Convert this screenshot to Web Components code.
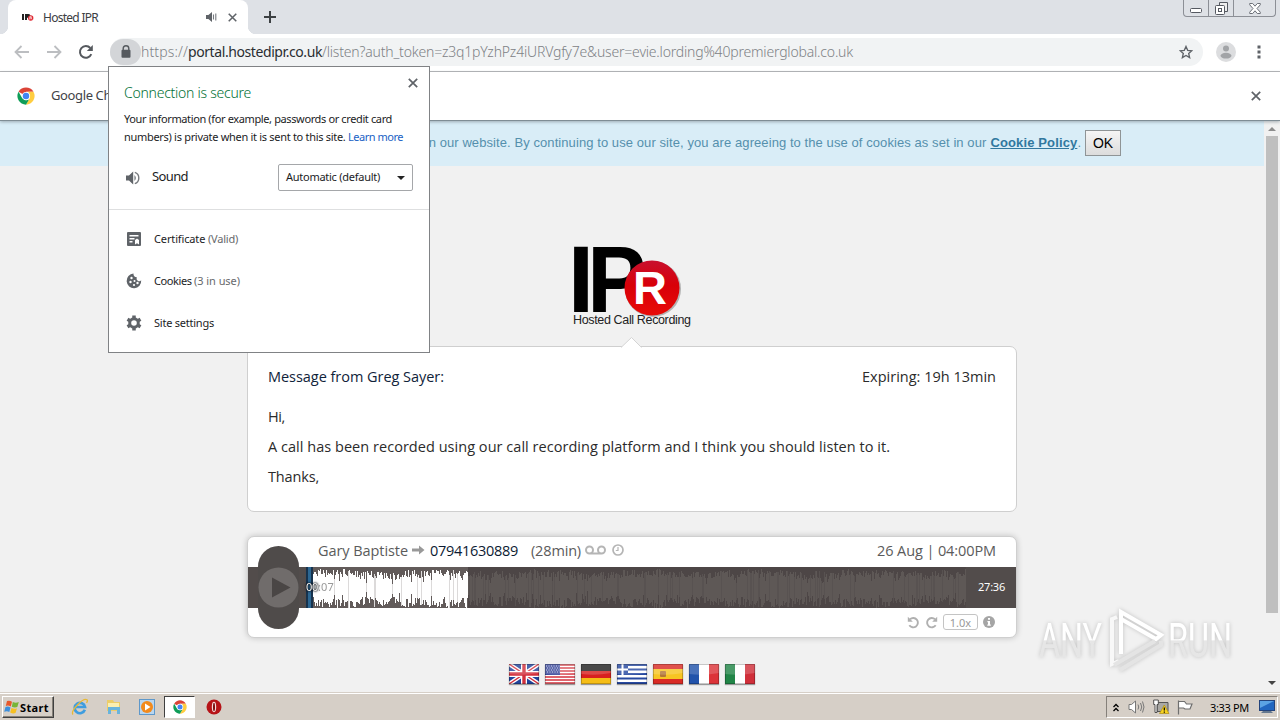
<!DOCTYPE html>
<html lang="en">
<head>
<meta charset="utf-8">
<title>Hosted IPR</title>
<style>
    :root {
        --ui: "Noto Sans", "DejaVu Sans", sans-serif;
        --body: "Open Sans", "Noto Sans", sans-serif;
        --page: #f1f1f1;
    }
    body {
        margin: 0;
        width: 1280px;
        height: 720px;
        overflow: hidden;
        position: relative;
        display: flex;
        flex-direction: column;
        font-family: var(--ui);
        background: var(--page);
    }
    .viewport { display: flex; height: 571px; }
    .page { width: 1264px; display: flex; flex-direction: column; align-items: center; overflow: hidden; }
</style>
</head>
<body>
<tab-strip></tab-strip>
<address-bar></address-bar>
<info-bar></info-bar>
<div class="viewport">
    <div class="page">
        <cookie-notice></cookie-notice>
        <ipr-logo></ipr-logo>
        <message-card>
            <fit-text slot="from" width="176">Message from Greg Sayer:</fit-text>
            <fit-text slot="expiry" width="134">Expiring: 19h 13min</fit-text>
            <div><fit-text width="17">Hi,</fit-text></div>
            <div><fit-text width="622">A call has been recorded using our call recording platform and I think you should listen to it.</fit-text></div>
            <div><fit-text width="51">Thanks,</fit-text></div>
        </message-card>
        <call-player></call-player>
        <flag-row></flag-row>
    </div>
    <scroll-bar></scroll-bar>
</div>
<task-bar></task-bar>
<site-popup></site-popup>
<water-mark></water-mark>

<script>
// 1. Helpers
function define(name, html, extra) {
    customElements.define(name, class extends HTMLElement {
        constructor() {
            super();
            this.attachShadow({ mode: 'open' }).innerHTML = html;
            if (extra) extra(this.shadowRoot);
        }
    });
}

const closeIcon = (size, color = '#5f6368') => `
    <svg width="${size}" height="${size}" viewBox="0 0 10 10"><path d="M.8.8l8.4 8.4M9.2.8L.8 9.2" stroke="${color}" stroke-width="1.7"/></svg>`;

const chromeIcon = (size) => `
    <svg width="${size}" height="${size}" viewBox="0 0 48 48">
        <circle cx="24" cy="24" r="23" fill="#fff"/>
        <path d="M24 24L4.1 12.5A23 23 0 0 1 43.9 12.5H24z" fill="#db4437"/>
        <path d="M43.9 12.5A23 23 0 0 1 24 47L34 29.5 30 12.5z" fill="#ffcd40"/>
        <path d="M24 47A23 23 0 0 1 4.1 12.5L14 29.7l10 5.3 8-2z" fill="#0f9d58"/>
        <circle cx="24" cy="24" r="11" fill="#fff"/>
        <circle cx="24" cy="24" r="8.6" fill="#4285f4"/>
    </svg>`;

// Text that spreads its letters over a given width
class FitText extends HTMLElement {
    constructor() {
        super();
        // no whitespace around the slot: the host keeps it
        this.attachShadow({ mode: 'open' }).innerHTML =
            '<style>:host { display: inline-block; white-space: pre; }</style><slot></slot>';
    }
    connectedCallback() {
        queueMicrotask(() => {
            const range = document.createRange();
            range.selectNodeContents(this);
            const natural = range.getBoundingClientRect().width;
            const target = Number(this.getAttribute('width'));
            this.style.letterSpacing = (target - natural) / this.textContent.length + 'px';
        });
    }
}
customElements.define('fit-text', FitText);

// 2. Browser chrome
define('tab-strip', `
    <style>
        :host { display: flex; height: 34px; background: #dee1e6; padding-left: 8px; box-sizing: border-box; justify-content: space-between; }
        .left { display: flex; align-items: center; }
        .tab { box-sizing: border-box; position: relative; width: 240px; height: 34px; background: #fff; border-radius: 8px 8px 0 0; display: flex; align-items: center; padding: 0 11px 0 14px; font-size: 12px; color: #3c4043; }
        .tab::before, .tab::after { content: ""; position: absolute; bottom: 0; width: 8px; height: 8px; }
        .tab::before { left: -8px; background: radial-gradient(circle at 0 0, #dee1e6 8px, #fff 8.5px); }
        .tab::after { right: -8px; background: radial-gradient(circle at 100% 0, #dee1e6 8px, #fff 8.5px); }
        .title { flex: 1; margin-left: 9px; }
        .plus { margin-left: 16px; }
        .window { display: flex; width: 93px; height: 17px; margin-right: 4px; box-sizing: border-box; border: 1px solid #8c8f96; border-top: 0; border-radius: 0 0 4px 4px; }
        .window div { display: flex; align-items: center; justify-content: center; border-right: 1px solid #8c8f96; }
        svg { display: block; }
    </style>
    <div class="left">
        <div class="tab">
            <svg width="12" height="12" viewBox="0 0 12 12"><path d="M0 3h2v6H0zM3 3h3.5a1.8 1.8 0 0 1 0 3.8H5V9H3z" fill="#222"/><circle cx="8.7" cy="7" r="2.7" fill="#e02a33"/><path d="M7.8 8.5V5.7h1.5v1.2H8M9 7l1 1.4" stroke="#fff" stroke-width=".7" fill="none"/></svg>
            <span class="title"><fit-text width="55">Hosted IPR</fit-text></span>
            <svg width="11" height="10" viewBox="0 0 11 10"><path d="M0 3h2.4L6 0v10L2.4 7H0z" fill="#5f6368"/><path d="M7.5 2.5v5M9.8 1.5v7" stroke="#777b80" stroke-width="1.1"/></svg>
            <span style="margin-left:11px">${closeIcon(9)}</span>
        </div>
        <svg class="plus" width="12" height="12" viewBox="0 0 12 12"><path d="M6 0v12M0 6h12" stroke="#3c4043" stroke-width="2"/></svg>
    </div>
    <div class="window">
        <div style="width:24px"><svg width="12" height="5" style="margin-top:4px"><rect x=".5" y=".5" width="11" height="4" rx="1" fill="#fff" stroke="#555961"/></svg></div>
        <div style="width:24px"><svg width="13" height="13"><path d="M4.5 3V.5h8v9H10" fill="#eee" stroke="#555961"/><rect x=".5" y="3.5" width="9" height="9" rx="1" fill="#fff" stroke="#555961"/><rect x="3.5" y="6.5" width="3" height="3" fill="none" stroke="#555961"/></svg></div>
        <div style="flex:1;border:0"><svg width="12" height="11"><path d="M.7.5h3L6 3.2 8.3.5h3v1.3L8 5.5l3.3 3.7v1.3h-3L6 7.8 3.7 10.5h-3V9.2L4 5.5.7 1.8z" fill="#fff" stroke="#6c7078"/></svg></div>
    </div>
`);

define('address-bar', `
    <style>
        :host { display: flex; align-items: center; box-sizing: border-box; height: 38px; padding: 0 0 2px 14px; background: #fff; border-bottom: 1px solid #b6b6b8; }
        svg { display: block; flex: none; }
        .field { display: flex; align-items: center; box-sizing: border-box; width: 1093px; height: 28px; margin-left: 16px; background: #f1f3f4; border-radius: 14px; padding-right: 10px; font-size: 14px; color: #7d8185; font-weight: 300; }
        .lock { width: 31px; height: 26px; border-radius: 14px; background: #d3d5d8; display: flex; align-items: center; justify-content: center; }
        .domain { color: #2a2d31; font-weight: 400; }
        .url { flex: 1; display: flex; }
    </style>
    <svg width="16" height="14" viewBox="0 0 16 14"><path d="M15 7H2M7.5 1L1.5 7l6 6" fill="none" stroke="#bcbec1" stroke-width="1.8"/></svg>
    <svg width="16" height="14" viewBox="0 0 16 14" style="margin-left:16px"><path d="M1 7h13M8.5 1l6 6-6 6" fill="none" stroke="#bcbec1" stroke-width="1.8"/></svg>
    <svg width="16" height="16" viewBox="0 0 16 16" style="margin-left:16px"><path d="M13.3 10.2A5.9 5.9 0 1 1 12.3 4" fill="none" stroke="#55595e" stroke-width="2"/><path d="M14.8 1v6h-6z" fill="#55595e"/></svg>
    <div class="field">
        <div class="lock"><svg width="10" height="13" viewBox="0 0 10 13"><path d="M2.2 5V3.5a2.8 2.8 0 0 1 5.6 0V5" fill="none" stroke="#55595e" stroke-width="1.4"/><rect x=".5" y="4.7" width="9" height="8" rx="1" fill="#55595e"/></svg></div>
        <div class="url"><fit-text width="47">https://</fit-text><fit-text class="domain" width="134">portal.hostedipr.co.uk</fit-text><fit-text width="531">/listen?auth_token=z3q1pYzhPz4iURVgfy7e&amp;user=evie.lording%40premierglobal.co.uk</fit-text></div>
        <svg width="14" height="14" viewBox="0 0 24 24"><path d="M12 2.5l2.9 6.7 7.1.6-5.4 4.8 1.6 7L12 17.9 5.8 21.6l1.6-7L2 9.8l7.1-.6z" fill="none" stroke="#5f6368" stroke-width="2.3"/></svg>
    </div>
    <svg width="20" height="20" viewBox="0 0 20 20" style="margin-left:13px"><circle cx="10" cy="10" r="10" fill="#dcdddf"/><circle cx="10" cy="6.5" r="3" fill="#a2a4a7"/><ellipse cx="10" cy="13.7" rx="5.5" ry="2.9" fill="#a2a4a7"/></svg>
    <svg width="4" height="14" viewBox="0 0 4 14" style="margin-left:21px"><path d="M.5.5h3v3h-3zM.5 5.5h3v3h-3zM.5 10.5h3v3h-3z" fill="#5f6368"/></svg>
`);

define('info-bar', `
    <style>
        :host { display: flex; align-items: center; box-sizing: border-box; height: 49px; padding: 0 19px 0 17px; background: #fff; border-bottom: 1px solid #7f8d95; box-shadow: 0 1px 3px #7f8d95aa; position: relative; font-size: 13px; color: #3f4347; }
        .msg { flex: 1; margin: 0 0 2px 16px; }
        svg { display: block; }
    </style>
    ${chromeIcon(18)}
    <span class="msg"><fit-text width="91">Google Chrome</fit-text></span>
    ${closeIcon(10)}
`);

define('scroll-bar', `
    <style>
        :host { width: 16px; display: flex; flex-direction: column; align-items: center; justify-content: space-between; background: #f1f1f1; box-sizing: border-box; padding: 5px 0 6px; }
        .thumb { width: 12px; height: 477px; margin-top: 5px; margin-bottom: auto; background: #bfbfbf; }
    </style>
    <svg width="8" height="5"><path d="M0 5l4-4 4 4z" fill="#8c8c8c"/></svg>
    <div class="thumb"></div>
    <svg width="8" height="5"><path d="M0 0h8L4 4z" fill="#444"/></svg>
`);

// 3. Page content
define('cookie-notice', `
    <style>
        :host { display: flex; align-items: center; justify-content: flex-end; box-sizing: border-box; width: 1264px; height: 45px; padding: 0 143px 2px 0; background: #d9edf7; color: #5590ad; font: 13px "Liberation Sans", sans-serif; }
        b { color: #31789f; margin-left: 4px; }
        b fit-text { text-decoration: underline; }
        button { width: 36px; height: 26px; margin-left: 4px; padding: 0; border: 1px solid #8f9496; border-radius: 0; background: linear-gradient(#f5f5f5, #dcdcdc); font: 14px "Liberation Sans", sans-serif; color: #000; }
    </style>
    <fit-text width="565">on our website. By continuing to use our site, you are agreeing to the use of cookies as set in our</fit-text>
    <b><fit-text width="87">Cookie Policy</fit-text></b>.
    <button>OK</button>
`);

define('ipr-logo', `
    <style>
        :host { display: block; margin-top: 76px; height: 104px; }
        svg { display: block; }
    </style>
    <svg width="124" height="90" viewBox="570 242 124 90">
        <defs><linearGradient id="red" x2="0" y2="1"><stop stop-color="#c8102e" offset="0"/><stop stop-color="#d80008" offset=".45"/><stop stop-color="#e80c08" offset="1"/></linearGradient></defs>
        <g font-family="Liberation Sans, sans-serif">
            <g font-size="95" font-weight="700">
                <text x="567.8" y="311.5">I</text>
                <text x="587.3" y="311.5" textLength="59" lengthAdjust="spacingAndGlyphs">P</text>
            </g>
            <circle cx="653" cy="289" r="28" fill="#999" opacity=".7"/>
            <circle cx="652" cy="288" r="27.5" fill="url(#red)"/>
            <text x="633" y="303.5" font-size="46" font-weight="700" fill="#fff" textLength="34" lengthAdjust="spacingAndGlyphs">R</text>
            <text x="573" y="324" font-size="12.5" fill="#222" textLength="118">Hosted Call Recording</text>
        </g>
    </svg>
`);

define('message-card', `
    <style>
        :host { display: block; position: relative; flex: none; box-sizing: border-box; width: 770px; height: 166px; padding: 15px 20px 0; background: #fff; border: 1px solid #cfcfcf; border-radius: 7px; font: 14.5px/30px var(--body); color: #2b2b2b; }
        header { display: flex; justify-content: space-between; margin-bottom: 10px; color: #10233a; }
        .expiry { color: #2b2b2b; }
        .arrow { position: absolute; top: -10px; left: 373px; }
    </style>
    <svg class="arrow" width="21" height="11"><path d="M0 10.5L10.5.5l10 10" fill="#fff" stroke="#d4d4d4"/><path d="M1 11l9.5-9 9.5 9z" fill="#fff"/></svg>
    <header><slot name="from"></slot><span class="expiry"><slot name="expiry"></slot></span></header>
    <slot></slot>
`);

define('call-player', `
    <style>
        :host { display: block; position: relative; flex: none; box-sizing: border-box; width: 770px; height: 102px; margin-top: 24px; background: #fff; border: 1px solid #cfcfcf; border-radius: 7px; box-shadow: 0 0 6px #0003; font: 14.5px var(--body); color: #5b5b5b; }
        header { display: flex; align-items: center; height: 30px; padding: 0 20px 4px 70px; box-sizing: border-box; }
        svg, canvas { display: block; }
        .number { color: #0d1b33; margin: 0 13px 0 5px; }
        .date { margin-left: auto; }
        .track { height: 41px; display: flex; align-items: center; background: #524c4b; padding-left: 58px; }
        .total { color: #fff; font: 11px var(--ui); margin: 0 0 2px 12px; }
        footer { display: flex; align-items: center; justify-content: flex-end; gap: 5px; height: 28px; padding-right: 21px; }
        .speed { box-sizing: border-box; width: 35px; height: 16px; border: 1px solid #c4c4c4; border-radius: 3px; font: 11px/15px var(--ui); text-align: center; color: #999; }
        .pill { position: absolute; left: 10px; top: 9px; width: 41px; height: 83px; border-radius: 21px; background: #4f4b4a; display: flex; align-items: center; }
        .time { position: absolute; left: 58px; top: 43px; display: flex; font: 11px/14px var(--ui); color: #999; }
        .time .min { color: #fff; text-shadow: 0 0 1px #000, 0 0 2px #000, 0 0 3px #0a1a2c; }
    </style>
    <header>
        <fit-text width="90">Gary Baptiste</fit-text>
        <svg width="13" height="10" viewBox="0 0 13 10" style="margin-left:4px"><path d="M0 3.5h7V.5L12.5 5 7 9.5v-3H0z" fill="#999"/></svg>
        <fit-text class="number" width="88">07941630889</fit-text>
        <fit-text width="50">(28min)</fit-text>
        <svg width="21" height="10" viewBox="0 0 21 10" style="margin-left:4px"><path d="M4.5 8.5h12M1 5a3.5 3.5 0 1 0 7 0 3.5 3.5 0 1 0-7 0M13 5a3.5 3.5 0 1 0 7 0 3.5 3.5 0 1 0-7 0" fill="none" stroke="#b5b5b5" stroke-width="2"/></svg>
        <svg width="12" height="12" viewBox="0 0 12 12" style="margin-left:6px"><circle cx="6" cy="6" r="5" fill="none" stroke="#b5b5b5" stroke-width="1.7"/><path d="M6 3v3.5H3.8" fill="none" stroke="#b5b5b5" stroke-width="1.2"/></svg>
        <fit-text class="date" width="119">26 Aug | 04:00PM</fit-text>
    </header>
    <div class="track">
        <canvas width="660" height="41"></canvas>
        <fit-text class="total" width="27">27:36</fit-text>
    </div>
    <footer>
        <svg width="13" height="13" viewBox="0 0 13 13"><path d="M3 3.2A4.7 4.7 0 1 1 2.3 9.3" fill="none" stroke="#b0b0b0" stroke-width="1.9"/><path d="M.8.7v5h5z" fill="#b0b0b0"/></svg>
        <svg width="13" height="13" viewBox="0 0 13 13"><path d="M10 3.2A4.7 4.7 0 1 0 10.7 9.3" fill="none" stroke="#b0b0b0" stroke-width="1.9"/><path d="M12.2.7v5h-5z" fill="#b0b0b0"/></svg>
        <div class="speed">1.0x</div>
        <svg width="12" height="12" viewBox="0 0 12 12"><circle cx="6" cy="6" r="6" fill="#a5a5a5"/><path d="M5 2h2v1.8H5zM4.4 5H7v3.5h.8v1.2H4.3V8.5H5V6.2h-.6z" fill="#fff"/></svg>
    </footer>
    <div class="pill"><svg width="41" height="41"><circle cx="20.5" cy="20.5" r="20" fill="#706c6b"/><path d="M14 10.5l18.5 10L14 30.5z" fill="#4a4645"/></svg></div>
    <div class="time"><fit-text class="min" width="12">00</fit-text><fit-text width="16">:07</fit-text></div>
`, (root) => {
    const ctx = root.querySelector('canvas').getContext('2d');
    let seed = 7;
    const rnd = () => (seed = (seed * 16807) % 2147483647) / 2147483647;

    ctx.fillStyle = '#625b5a';
    ctx.fillRect(0, 0, 162, 41);
    ctx.fillStyle = '#4d4646';
    ctx.fillRect(162, 0, 498, 41);

    // each column is a bar around the middle line, now and then a quiet one
    for (let x = 7; x < 660; x++) {
        const swell = 1.5 * Math.sin(x / 17) + Math.sin(x / 5);
        const quiet = rnd() < .12 ? 5 : 0;
        const up = Math.min(19, 9.5 + swell + rnd() * 8 - quiet);
        const down = Math.min(20, 10 + swell + rnd() * 10 - quiet);
        ctx.fillStyle = x < 162 ? (rnd() < .08 ? '#dcdada' : '#fff') : (rnd() < .15 ? '#585251' : '#5e5856');
        ctx.fillRect(x, Math.round(20.5 - up), 1, Math.round(up + down));
    }

    ctx.fillStyle = '#17334e';
    ctx.fillRect(0, 0, 7, 41);
    ctx.fillStyle = '#2c6793';
    ctx.fillRect(2, 0, 3, 41);
});

const flags = [
    '<rect width="30" height="20" fill="#21439a"/><path d="M0 0l30 20M30 0L0 20" stroke="#fff" stroke-width="4"/><path d="M0 0l30 20M30 0L0 20" stroke="#d22f3c" stroke-width="1.4"/><path d="M15 0v20M0 10h30" stroke="#fff" stroke-width="6"/><path d="M15 0v20M0 10h30" stroke="#d22f3c" stroke-width="3.4"/>',
    '<rect width="30" height="20" fill="#fff"/><path d="M0 1h30M0 4h30M0 7h30M0 10h30M0 13h30M0 16h30M0 19h30" stroke="#d4323d" stroke-width="1.6"/><rect width="15" height="11" fill="#39479a"/><path d="M1 2h14M2 4h13M1 6h14M2 8h13" stroke="#c9cfe8" stroke-dasharray="1 1.5"/>',
    '<rect width="30" height="7" fill="#222"/><rect y="7" width="30" height="7" fill="#d8201f"/><rect y="14" width="30" height="6" fill="#f5bd16"/>',
    '<rect width="30" height="20" fill="#fff"/><path d="M0 1h30M0 5.5h30M0 10h30M0 14.5h30M0 19h30" stroke="#2749a0" stroke-width="2.2"/><rect width="11" height="11" fill="#2749a0"/><path d="M5.5 0v11M0 5.5h11" stroke="#fff" stroke-width="2"/>',
    '<rect width="30" height="20" fill="#d92b25"/><rect y="5" width="30" height="10" fill="#f7c522"/><rect x="7" y="7" width="6" height="6" rx="1" fill="#b27636"/>',
    '<rect width="30" height="20" fill="#fff"/><rect width="10" height="20" fill="#2153ab"/><rect x="20" width="10" height="20" fill="#dc3439"/>',
    '<rect width="30" height="20" fill="#fff"/><rect width="10" height="20" fill="#218547"/><rect x="20" width="10" height="20" fill="#d02f3a"/>'
];

define('flag-row', `
    <style>
        :host { display: flex; gap: 6px; margin-top: 26px; }
        svg { display: block; box-shadow: 0 1px 1px #999; }
    </style>
    ${flags.map(f => `<svg width="30" height="20">${f}<path d="M0 0h30v9Q15 12 0 10z" fill="#fff" opacity=".18"/><rect x=".5" y=".5" width="29" height="19" fill="none" stroke="#000" opacity=".22"/></svg>`).join('')}
`);

// 4. Windows taskbar
define('task-bar', `
    <style>
        :host { display: flex; align-items: center; box-sizing: border-box; height: 28px; padding: 1px 2px 0; background: #d6cfc7; border-top: 1px solid #d6cfc7; box-shadow: inset 0 1px #fff; color: #000; }
        svg { display: block; flex: none; }
        .start { display: flex; align-items: center; box-sizing: border-box; width: 52px; height: 22px; padding-left: 1px; border: 1px solid; border-color: #fff #404040 #404040 #fff; box-shadow: inset -1px -1px #858078; font: 700 11px var(--ui); }
        .apps { display: flex; align-items: center; margin-left: 17px; gap: 16px; }
        .active { display: flex; align-items: center; justify-content: center; box-sizing: border-box; width: 31px; height: 22px; margin: 0 -6px 0 -7px; background: #fff; border: 1px solid; border-color: #404040 #fff #fff #404040; }
        .tray { display: flex; align-items: center; box-sizing: border-box; width: 172px; height: 22px; margin-left: auto; padding: 0 1px 0 6px; border: 1px solid; border-color: #85807a #fff #fff #85807a; font-size: 11px; }
    </style>
    <div class="start">
        <svg width="16" height="16" viewBox="0 0 16 16"><path d="M3 2q2.5-1 5 .7L6.8 7.5Q4 6 1.8 7z" fill="#e8582a"/><path d="M8.8 3q3 1.5 6 0l-1.5 5q-2.5 1-5.5-.2z" fill="#77b536"/><path d="M1.5 8q2.5-1 5 .5L5.3 13Q3 11.5.2 12.8z" fill="#3d8fdc"/><path d="M7.5 9q3 1.3 5.5.2L11.5 14Q9 15 6.2 13.5z" fill="#f6c022"/></svg>
        <fit-text width="29">Start</fit-text>
    </div>
    <div class="apps">
        <svg width="18" height="18" viewBox="0 0 18 18"><path d="M13.8 11.8A5.2 5.2 0 1 1 14 9H5" fill="none" stroke="#3f9ddf" stroke-width="2.7"/><path d="M2 16.5C-1 13 12-.5 16 1.8q1 1-.5 3" fill="none" stroke="#e8b935" stroke-width="1.3"/></svg>
        <svg width="18" height="18" viewBox="0 0 18 18"><path d="M2 4V2h6l1 2h6v9H2z" fill="#eccd68"/><path d="M3 5h11v5H3z" fill="#fbefb0"/><path d="M3 9h12v7h-3v-4H6v4H3z" fill="#69b4dc"/></svg>
        <svg width="16" height="16" viewBox="0 0 16 16"><rect x=".5" y=".5" width="15" height="15" fill="#b9d6ef" stroke="#5e98ca"/><circle cx="8" cy="8" r="6" fill="#f28a1c"/><path d="M6 4.5L11.5 8 6 11.5z" fill="#fff"/></svg>
        <div class="active">${chromeIcon(14)}</div>
        <svg width="16" height="16" viewBox="0 0 16 16" style="margin-left:1px"><circle cx="8" cy="8" r="7.5" fill="#b61317"/><ellipse cx="8" cy="8" rx="2.2" ry="5.2" fill="#f5dcdc"/><ellipse cx="8" cy="8" rx="1" ry="4.3" fill="#7c0b0d"/></svg>
    </div>
    <div class="tray">
        <svg width="6" height="9" viewBox="0 0 6 9"><path d="M.5 4L3 1.5 5.5 4M.5 8L3 5.5 5.5 8" fill="none" stroke="#000" stroke-width="1.3"/></svg>
        <svg width="17" height="14" viewBox="0 0 17 14" style="margin-left:9px"><path d="M1 4.5h2.5L7.5 1v12L3.5 9.5H1z" fill="#fff" stroke="#777"/><path d="M10 4.5q1.5 2.5 0 5M12.5 3q2.5 4 0 8M14.5 1.5q3 5.5 0 11" fill="none" stroke="#777"/></svg>
        <svg width="17" height="16" viewBox="0 0 17 16" style="margin-left:8px"><path d="M4 3.5h11v9H4z" fill="#aaa9a5" stroke="#555"/><path d="M.7 1h4.6v4.5H4v8H2v-8H.7z" fill="#fff" stroke="#444" stroke-width=".9"/><path d="M11.3 6L16 14.5H6.5z" fill="#f8d322" stroke="#ad8d14" stroke-width=".7"/><path d="M11.3 8.5v3M11.3 12.5v1.2" stroke="#000" stroke-width="1.2"/></svg>
        <svg width="17" height="15" viewBox="0 0 17 15" style="margin-left:7px"><path d="M1.5.5v14M1.5 1.5h6l2 2.5h5.5l-2 5H8L6.5 8h-5" fill="#fff" stroke="#6f6f6f" stroke-width="1.2"/></svg>
        <fit-text width="39" style="margin-left:16px">3:33 PM</fit-text>
        <svg width="17" height="14" viewBox="0 0 17 14" style="margin-left:auto"><rect x=".5" y=".5" width="15" height="10" fill="#2267c0" stroke="#24447c"/><path d="M1 1h14L1 8z" fill="#5ba3e4"/><path d="M4 11h8l2 2H2z" fill="#65788f"/></svg>
    </div>
`);

// 5. Overlays
define('site-popup', `
    <style>
        :host { display: block; position: absolute; left: 108px; top: 66px; box-sizing: border-box; width: 322px; height: 287px; background: #fff; border: 1px solid #808285; font-size: 11px; line-height: 18px; color: #1b1c1e; }
        svg { display: block; }
        .top { display: flex; justify-content: space-between; padding: 11px 11px 0 15px; }
        h2 { margin: 5px 0 0; font-size: 14px; font-weight: 300; line-height: 20px; color: #007034; }
        p { margin: 7px 15px 0; }
        a { color: #1a5fc4; }
        .sound { display: flex; align-items: center; margin: 18px 16px 0 17px; height: 27px; }
        .sound .name { margin: 0 0 3px 12px; flex: 1; font-size: 13px; }
        .select { display: flex; align-items: center; justify-content: space-between; box-sizing: border-box; width: 135px; height: 27px; border: 1px solid #a5a7aa; border-radius: 2px; padding: 0 7px; }
        .select fit-text { margin-bottom: 1px; }
        .list { margin-top: 18px; border-top: 1px solid #dedfe0; padding: 8px 18px 0 17px; }
        .row { display: flex; align-items: center; height: 42px; gap: 12px; }
        .row span { color: #67696c; }
    </style>
    <div class="top"><h2><fit-text width="127">Connection is secure</fit-text></h2>${closeIcon(10)}</div>
    <p><fit-text width="268">Your information (for example, passwords or credit card</fit-text><br><fit-text width="224">numbers) is private when it is sent to this site. </fit-text><a><fit-text width="55">Learn more</fit-text></a></p>
    <div class="sound">
        <svg width="14" height="14" viewBox="0 0 14 14"><path d="M0 4.5h3L7.2.5v13L3 9.5H0z" fill="#5f6368"/><path d="M8.5 4q2.5 3 0 6z" fill="#5f6368"/><path d="M8.8 1.3q4 1.2 4 5.7t-4 5.7" fill="none" stroke="#777a7e" stroke-width="1.4"/></svg>
        <div class="name"><fit-text width="36">Sound</fit-text></div>
        <div class="select"><fit-text width="94">Automatic (default)</fit-text><svg width="8" height="4"><path d="M0 0h8L4 4z" fill="#222"/></svg></div>
    </div>
    <div class="list">
        <div class="row"><svg width="16" height="14" viewBox="0 0 16 14"><path fill-rule="evenodd" d="M2 0h12q1 0 1 1v12q0 1-1 1H2q-1 0-1-1V1q0-1 1-1zM3.5 3v1.5h9V3zM3.5 6v1.5h5V6zM3.5 9v1.5h3V9zM9 8v4.5l2-1.2 2 1.2V8l-2-1.5z" fill="#5f6368"/></svg><div><fit-text width="54">Certificate </fit-text><span><fit-text width="30">(Valid)</fit-text></span></div></div>
        <div class="row"><svg width="16" height="16" viewBox="0 0 16 16"><path d="M7.5.6a3.2 3.2 0 0 0 3.3 3.7 2.7 2.7 0 0 0 4.4 3A7.3 7.3 0 1 1 7.5.6z" fill="#5f6368"/><g fill="#fff"><circle cx="5.5" cy="5" r="1.2"/><circle cx="4.5" cy="9" r="1.2"/><circle cx="8.5" cy="8" r="1"/><circle cx="11.5" cy="10" r="1.2"/><circle cx="8" cy="12" r="1.1"/></g></svg><div><fit-text width="40">Cookies </fit-text><span><fit-text width="46">(3 in use)</fit-text></span></div></div>
        <div class="row"><svg width="16" height="16" viewBox="0 0 16 16"><circle cx="8" cy="8" r="4.3" fill="none" stroke="#5f6368" stroke-width="3"/><path d="M8 .5v3M8 12.5v3M1.5 4.25l2.6 1.5M11.9 10.25l2.6 1.5M1.5 11.75l2.6-1.5M11.9 5.75l2.6-1.5" stroke="#5f6368" stroke-width="3.5"/></svg><fit-text width="60">Site settings</fit-text></div>
    </div>
`);

define('water-mark', `
    <style>
        :host { display: block; position: absolute; left: 1032px; top: 604px; }
        svg { display: block; filter: drop-shadow(0 0 2px #0003); }
    </style>
    <svg width="206" height="72" viewBox="1032 604 206 72">
        <defs><linearGradient id="fade" gradientUnits="userSpaceOnUse" x1="0" y1="620" x2="0" y2="660"><stop offset=".5" stop-color="#fff"/><stop offset=".52" stop-color="#e6e6e6"/></linearGradient></defs>
        <g fill="url(#fade)" font-family="Roboto, sans-serif" font-size="49">
            <text x="1039" y="657" textLength="63" lengthAdjust="spacingAndGlyphs">ANY</text>
            <text x="1168" y="657" textLength="64" lengthAdjust="spacingAndGlyphs">RUN</text>
        </g>
        <g fill="none" stroke-width="4">
            <path d="M1117 617l-5 2v45l7-3" stroke="#f8f8f8"/>
            <path d="M1121 654v-42l40 23-5 4-35-20" stroke="#fff"/>
            <path d="M1114 665l41-24M1120 670l41-25v-4" stroke="#e4e4e4"/>
        </g>
    </svg>
`);
</script>
</body>
</html>
